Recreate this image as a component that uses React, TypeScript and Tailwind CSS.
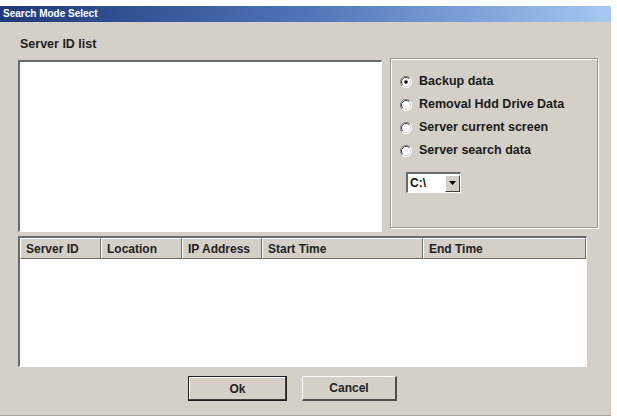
import React from "react";

const font = { fontFamily: '"Liberation Sans", Arial, sans-serif' };

function Radio({ checked }: { checked?: boolean }) {
  return (
    <svg width="12" height="12" viewBox="0 0 12 12" className="shrink-0">
      <circle cx="6" cy="6" r="5.5" fill="#ffffff" />
      <path d="M10 2 A5.5 5.5 0 0 0 2 10" stroke="#808080" strokeWidth="1" fill="none" />
      <path d="M9.2 2.8 A4.5 4.5 0 0 0 2.8 9.2" stroke="#404040" strokeWidth="1" fill="none" />
      <path d="M2 10 A5.5 5.5 0 0 0 10 2" stroke="#ffffff" strokeWidth="1" fill="none" />
      <path d="M2.8 9.2 A4.5 4.5 0 0 0 9.2 2.8" stroke="#d4d0c8" strokeWidth="1" fill="none" />
      {checked && <circle cx="6" cy="6" r="1.8" fill="#000000" />}
    </svg>
  );
}

function RadioRow({ label, checked }: { label: string; checked?: boolean }) {
  return (
    <div className="flex items-center h-[23px] gap-[7px]">
      <Radio checked={checked} />
      <span className="text-[12.5px] font-bold text-[#1a1a1a] leading-none">{label}</span>
    </div>
  );
}

const cols = [
  { label: "Server ID", w: "w-[81px]" },
  { label: "Location", w: "w-[81px]" },
  { label: "IP Address", w: "w-[80px]" },
  { label: "Start Time", w: "w-[161px]" },
  { label: "End Time", w: "w-[163px]" },
];

export default function App() {
  return (
    <div className="w-[617px] h-[418px] bg-white pt-[6px] overflow-hidden" style={font}>
      <div className="w-[611px] h-[410px] bg-[#d4d0c8] flex flex-col border-b border-[#a8a49c]">
        <div className="h-[16px] bg-gradient-to-r from-[#1e3a7a] via-[#4f74b8] to-[#a6c8f0] flex items-center px-[3px]">
          <span className="text-white text-[10px] font-bold leading-none">Search Mode Select</span>
        </div>
        <div className="flex flex-col pl-[18px]">
          <div className="mt-[14px] h-[16px] leading-[16px] pl-[2px] text-[12.5px] font-bold text-[#222]">
            Server ID list
          </div>
          <div className="mt-[8px] flex items-start">
            <div className="w-[364px] h-[172px] bg-white border-t-2 border-l-2 border-t-[#6a6a6a] border-l-[#6a6a6a] border-b border-r border-b-white border-r-white" />
            <div className="ml-[8px] mt-[-2px] w-[208px] h-[170px] border border-[#9a968e] shadow-[inset_1px_1px_0_#ffffff,1px_1px_0_#ffffff] pt-[11px] pl-[9px] flex flex-col">
              <RadioRow label="Backup data" checked />
              <RadioRow label="Removal Hdd Drive Data" />
              <RadioRow label="Server current screen" />
              <RadioRow label="Server search data" />
              <div className="mt-[10px] ml-[6px] w-[55px] h-[21px] bg-white border-t-2 border-l-2 border-t-[#6a6a6a] border-l-[#6a6a6a] border-b border-r border-b-white border-r-white flex items-center">
                <span className="flex-1 pl-[2px] text-[12px] font-bold text-[#111] leading-none">C:\</span>
                <div className="w-[15px] h-[17px] bg-[#d4d0c8] border-t border-l border-t-white border-l-white border-b border-r border-b-[#404040] border-r-[#404040] flex items-center justify-center">
                  <svg width="7" height="4" viewBox="0 0 7 4">
                    <path d="M0 0 H7 L3.5 4 Z" fill="#000" />
                  </svg>
                </div>
              </div>
            </div>
          </div>
          <div className="mt-[4px] w-[569px] h-[131px] bg-white border-t-2 border-l-2 border-t-[#6a6a6a] border-l-[#6a6a6a] border-b border-r border-b-white border-r-white flex flex-col">
            <div className="flex h-[21px] bg-[#d4d0c8]">
              {cols.map((c) => (
                <div
                  key={c.label}
                  className={`${c.w} h-full flex items-center pl-[5px] border-t border-l border-t-white border-l-white border-b border-r border-b-[#6a6a6a] border-r-[#6a6a6a] text-[12px] font-bold text-[#222] leading-none`}
                >
                  {c.label}
                </div>
              ))}
            </div>
          </div>
          <div className="mt-[9px] flex gap-[15px] pl-[170px]">
            <button className="w-[99px] h-[25px] bg-[#d4d0c8] border border-[#202020] shadow-[inset_-1px_-1px_0_#404040,inset_1px_1px_0_#ffffff] text-[12px] font-bold text-[#222]">
              Ok
            </button>
            <button className="w-[95px] h-[25px] bg-[#d4d0c8] border-t border-l border-t-white border-l-white border-b-2 border-r-2 border-b-[#505050] border-r-[#505050] text-[12px] font-bold text-[#222]">
              Cancel
            </button>
          </div>
        </div>
      </div>
    </div>
  );
}
